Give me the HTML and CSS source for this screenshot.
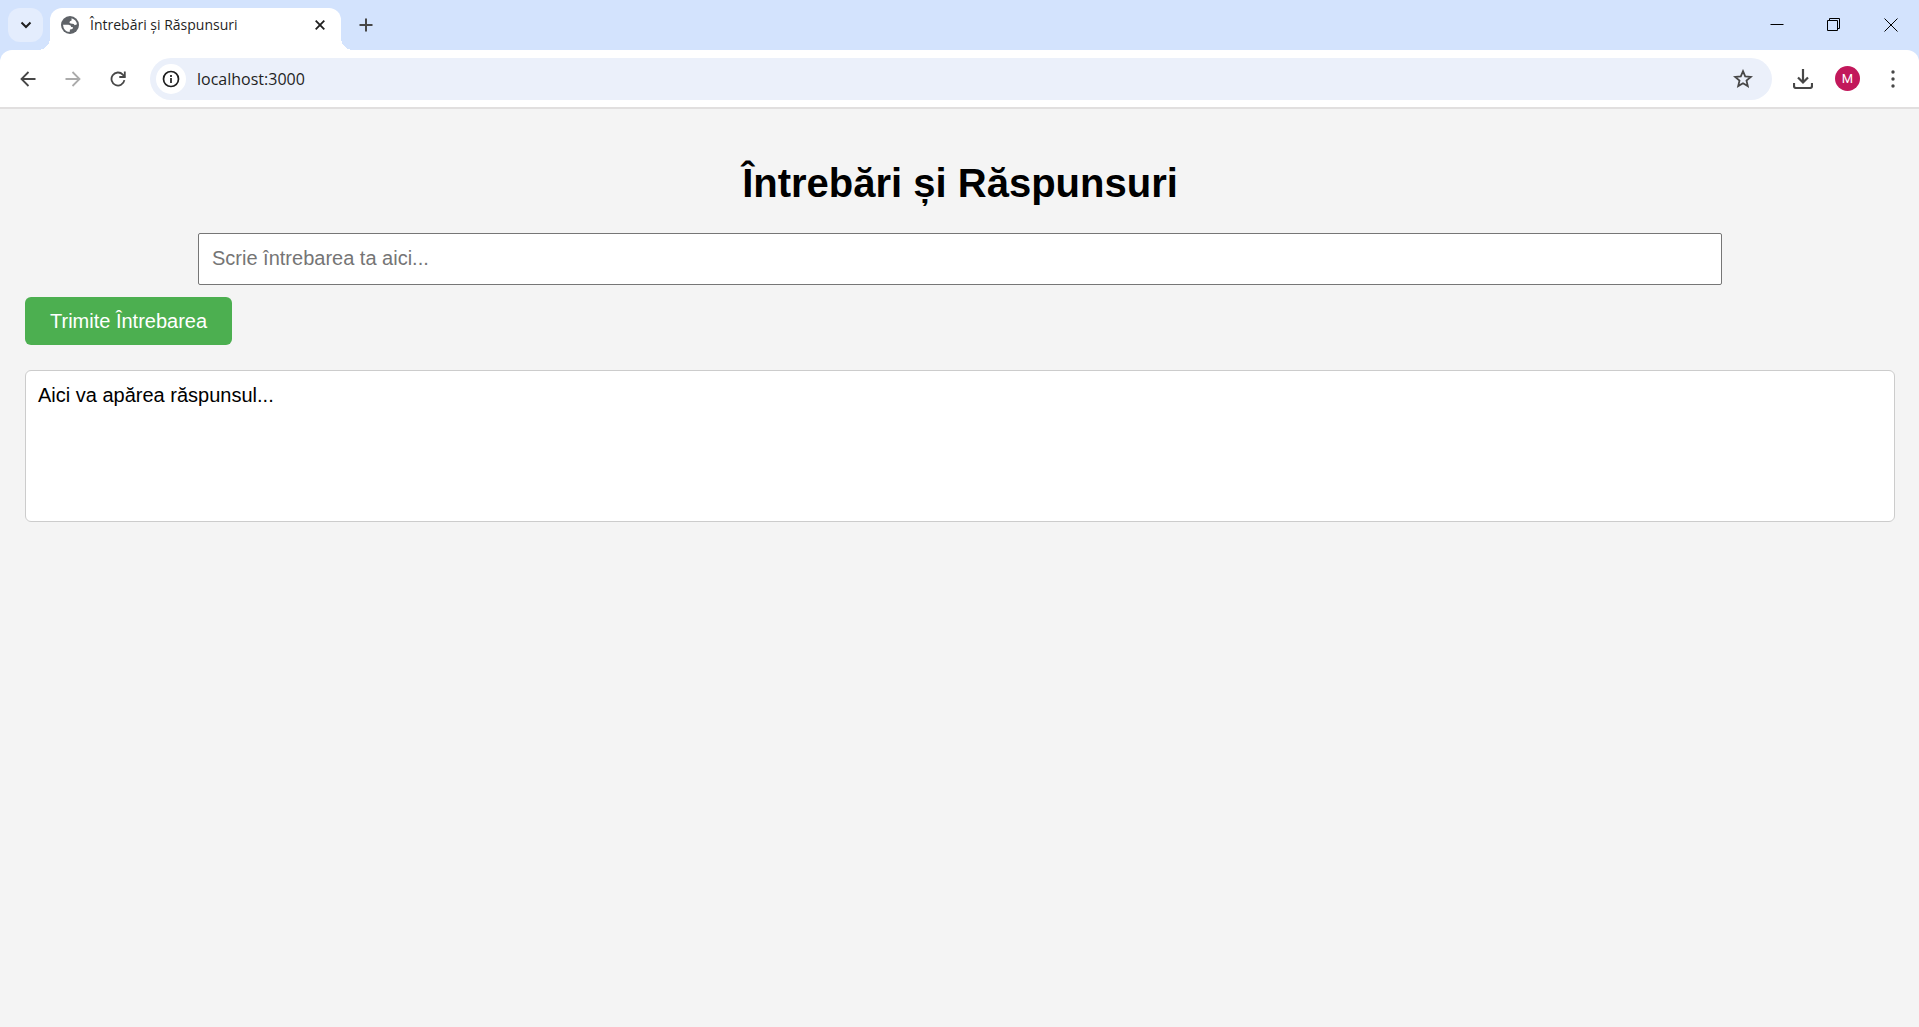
FILE: index.html
```html
<!DOCTYPE html>
<html lang="ro">
<head>
<meta charset="utf-8">
<meta name="viewport" content="width=device-width, initial-scale=1">
<title>Întrebări și Răspunsuri</title>
<link rel="stylesheet" href="styles.css">
</head>
<body>
<header class="browser">
  <div class="tab-strip">
    <button class="tab-search" type="button" aria-label="Caută în file">
      <svg width="12" height="8" viewBox="0 0 12 8" fill="none" stroke="#1f1f1f" stroke-width="2"><path d="M1.500 1.500L6 6l4.500-4.500"/></svg>
    </button>
    <div class="tab">
      <svg width="18" height="18" viewBox="0 0 18 18"><circle cx="9" cy="9" r="9" fill="#5f6368"/><path d="M10.500 2.200 Q15.400 3.700 16 8.300 L13.700 9.200 Q12.900 7.600 11 7.800 L9 7.300 Q7.800 6.200 9 5.200 L10.600 4.600zM2 8.700 L7.500 8.700 Q10.300 9 10.200 11 L12 11.200 Q12.500 12.900 10.500 13.200 L9 13.500 L8.600 16 Q2.600 15.500 2 8.700z" fill="#fff"/></svg>
      <span class="tab-title">Întrebări și Răspunsuri</span>
      <button class="tab-close" type="button" aria-label="Închide fila">
        <svg width="10" height="10" viewBox="0 0 10 10" fill="none" stroke="#1f1f1f" stroke-width="1.800"><path d="M.7.7l8.600 8.600M9.300.7L.7 9.300"/></svg>
      </button>
    </div>
    <button class="new-tab" type="button" aria-label="Filă nouă">
      <svg width="14" height="14" viewBox="0 0 14 14" stroke="#474747" stroke-width="2"><path d="M7 0.500v13M0.500 7h13"/></svg>
    </button>
    <div class="window-controls">
      <button type="button" aria-label="Minimizează"><svg width="14" height="14" viewBox="0 0 14 14" stroke="#000"><path d="M0.500 6.500h13"/></svg></button>
      <button type="button" aria-label="Restabilește"><svg width="14" height="14" viewBox="0 0 14 14" fill="none" stroke="#000"><path d="M.5 2.500h10v10h-10zM2.500 2.500v-2h10v10h-2"/></svg></button>
      <button type="button" aria-label="Închide"><svg width="14" height="14" viewBox="0 0 14 14" stroke="#000"><path d="M.5.5l13 13M13.500.5l-13 13"/></svg></button>
    </div>
  </div>
  <div class="toolbar">
    <nav class="history">
      <button type="button" aria-label="Înapoi"><svg width="16" height="16" viewBox="0 0 16 16" fill="none" stroke="#474747" stroke-width="1.800"><path d="M15.500 8H2M8.500 1L1.500 8l7 7"/></svg></button>
      <button type="button" aria-label="Înainte" disabled><svg width="16" height="16" viewBox="0 0 16 16" fill="none" stroke="#ababab" stroke-width="1.800"><path d="M.5 8H14M7.500 1l7 7-7 7"/></svg></button>
      <button type="button" aria-label="Reîncarcă"><svg width="16" height="16" viewBox="0 0 16 16" fill="none" stroke="#474747" stroke-width="1.800"><path d="M14.400 9.200A6.500 6.500 0 1 1 12.800 3.600L14.800 6"/><path d="M14.800.5v5.500H9.300"/></svg></button>
    </nav>
    <div class="address-bar">
      <button class="site-info" type="button" aria-label="Informații despre site">
        <svg width="18" height="18" viewBox="0 0 18 18" fill="none" stroke="#1f1f1f" stroke-width="1.700"><circle cx="9" cy="9" r="7.500"/><path d="M9 8v5M9 5v2"/></svg>
      </button>
      <input class="address" type="text" aria-label="Adresă" value="localhost:3000">
      <button class="bookmark" type="button" aria-label="Marchează pagina">
        <svg width="20" height="19" viewBox="0 0 20 19" fill="none" stroke="#474747" stroke-width="1.800"><path d="M10 2.200l2.200 5.200 5.600.5-4.300 3.700 1.300 5.500-4.800-2.900-4.800 2.900 1.300-5.500-4.300-3.700 5.600-.5z"/></svg>
      </button>
    </div>
    <div class="actions">
      <button type="button" aria-label="Descărcări"><svg width="20" height="20" viewBox="0 0 20 20" fill="none" stroke="#474747" stroke-width="2.200"><path d="M10 0v13M5 8.500l5 5 5-5M1 14v3q0 2 2 2h14q2 0 2-2v-3"/></svg></button>
      <button type="button" class="avatar" aria-label="Profil">M</button>
      <button type="button" aria-label="Meniu"><svg width="4" height="18" viewBox="0 0 4 18" fill="#474747"><circle cx="2" cy="2" r="1.700"/><circle cx="2" cy="9" r="1.700"/><circle cx="2" cy="16" r="1.700"/></svg></button>
    </div>
  </div>
</header>
<main class="page">
  <h1 class="title">Întrebări și Răspunsuri</h1>
  <input class="question" type="text" aria-label="Întrebare" placeholder="Scrie întrebarea ta aici...">
  <button class="submit" type="button">Trimite Întrebarea</button>
  <div class="answer">Aici va apărea răspunsul...</div>
</main>
</body>
</html>
```
FILE: styles.css
```css
body {
  margin: 0;
  min-height: 100vh;
  background: #f4f4f4;
  color: #000;
  font-family: "Liberation Sans", Arial, sans-serif;
  font-size: 20px;
}

button,
input {
  margin: 0;
  font: inherit;
}

button {
  padding: 0;
  border: 0;
  background: none;
}

svg {
  display: block;
  flex: none;
}

/* Browser frame */
.browser {
  background: #d3e3fd;
  border-bottom: 2px solid #e1dfdf;
  font-family: "Open Sans", "Noto Sans", sans-serif;
}

.browser button {
  display: flex;
  align-items: center;
  justify-content: center;
}

.tab-strip {
  display: flex;
  align-items: center;
  height: 50px;
  padding-left: 8px;
}

.tab-search {
  width: 35px;
  height: 34px;
  border-radius: 12px;
  background: #e4edfd;
}

.tab {
  position: relative;
  align-self: flex-end;
  display: flex;
  align-items: center;
  gap: 11px;
  box-sizing: border-box;
  width: 291px;
  height: 42px;
  margin-left: 7px;
  padding: 0 13px 8px 11px;
  border-radius: 12px 12px 0 0;
  background: #fff;
}

/* Curved feet that join the active tab to the toolbar */
.tab::before,
.tab::after {
  content: "";
  position: absolute;
  bottom: 0;
  width: 12px;
  height: 12px;
}

.tab::before {
  right: 100%;
  background: radial-gradient(circle at 0 0, transparent 12px, #fff 12px);
}

.tab::after {
  left: 100%;
  background: radial-gradient(circle at 100% 0, transparent 12px, #fff 12px);
}

.tab-title {
  flex: 1;
  color: #1f1f1f;
  font-size: 14px;
  line-height: 20px;
  white-space: nowrap;
}

.tab-close {
  width: 16px;
  height: 16px;
}

.new-tab {
  width: 34px;
  height: 34px;
  margin-left: 8px;
}

.window-controls {
  display: flex;
  margin-left: auto;
}

.window-controls button {
  width: 57px;
  height: 50px;
}

.toolbar {
  display: flex;
  align-items: center;
  height: 57px;
  border-radius: 12px 12px 0 0;
  background: #fff;
}

.history {
  display: flex;
  gap: 10px;
  padding: 0 15px 0 10px;
}

.history button {
  width: 35px;
  height: 35px;
}

.address-bar {
  flex: 1;
  display: flex;
  align-items: center;
  box-sizing: border-box;
  height: 42px;
  padding: 0 19px 0 6px;
  border-radius: 21px;
  background: #ebf0fa;
}

.site-info {
  width: 30px;
  height: 30px;
  border-radius: 50%;
  background: #fff;
}

.address {
  flex: 1;
  min-width: 0;
  padding: 0 11px;
  border: 0;
  background: none;
  color: #1f1f1f;
  font-size: 16px;
  line-height: 24px;
}

.actions {
  display: flex;
  align-items: center;
  gap: 10px;
  padding: 0 9px 0 13px;
}

.actions button {
  width: 35px;
  height: 35px;
}

.actions .avatar {
  width: 25px;
  height: 25px;
  margin: 0 5px;
  border-radius: 50%;
  background: #c2185b;
  color: #fff;
  font-family: Roboto, sans-serif;
  font-size: 13px;
}

/* Page content */
.page {
  padding: 51px 24px 24px 25px;
}

.title {
  margin: 0 0 27px;
  font-size: 40px;
  line-height: 46px;
  text-align: center;
}

.question {
  display: block;
  box-sizing: content-box;
  width: 80%;
  height: 24px;
  margin: 0 auto 12px;
  padding: 12px 13px 14px;
  border: 1px solid #767676;
  border-radius: 2px;
  background: #fff;
}

.question::placeholder {
  color: #757575;
}

.submit {
  display: block;
  height: 48px;
  padding: 0 25px;
  border-radius: 6px;
  background: #4caf50;
  color: #fff;
}

.answer {
  min-height: 124px;
  margin-top: 25px;
  padding: 13px 12px;
  border: 1px solid #ccc;
  border-radius: 6px;
  background: #fff;
  line-height: 23px;
}
```
